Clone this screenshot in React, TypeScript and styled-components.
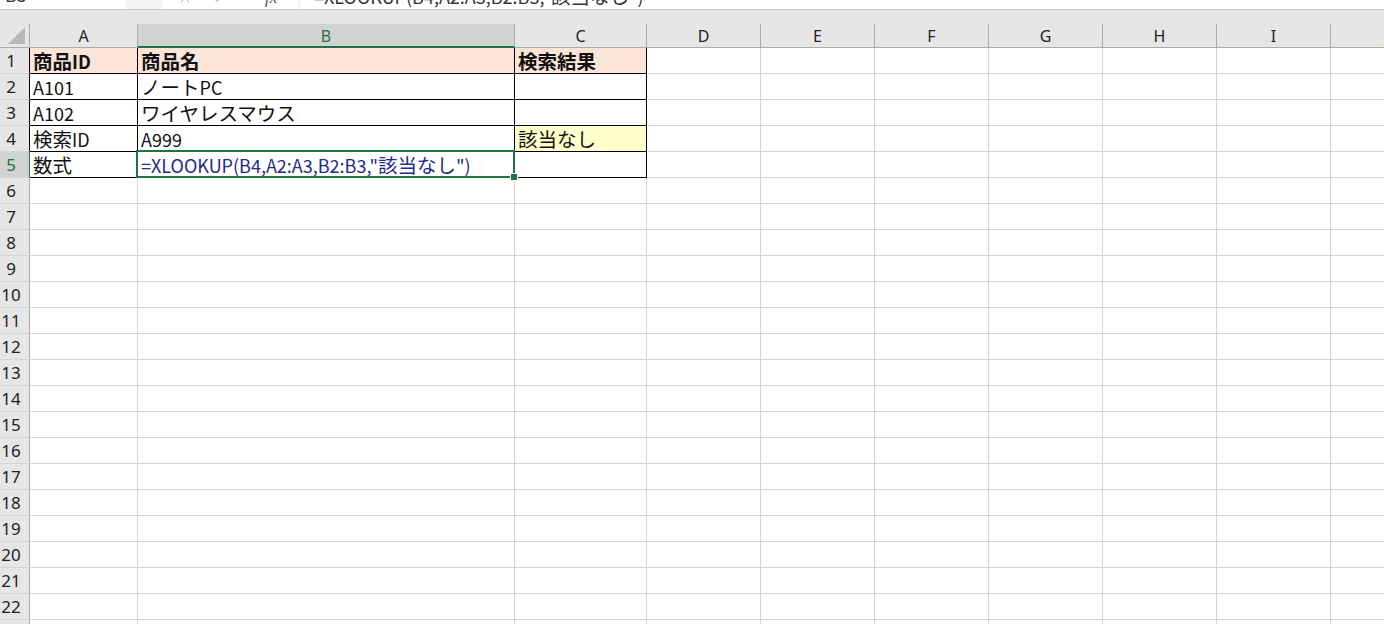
import React from "react";
import styled, { createGlobalStyle } from "styled-components";
import { X, Check } from "lucide-react";

const GlobalStyle = createGlobalStyle`
  html, body {
    margin: 0;
    padding: 0;
    background: #ffffff;
  }
  body {
    font-family: "Noto Sans CJK JP", "Noto Sans", sans-serif;
    overflow: hidden;
  }
`;

const GREEN = "#217346";
const GRID = "#d4d4d4";
const HEAD_LINE = "#ababab";

const colWidths = [108, 377, 132, 114, 114, 114, 114, 114, 114, 114];
const colNames = ["A", "B", "C", "D", "E", "F", "G", "H", "I", "J"];

type CellData = { text?: string; bold?: boolean; fill?: string; color?: string };

const data: Record<number, CellData[]> = {
  1: [
    { text: "商品ID", bold: true, fill: "#fbe4d8" },
    { text: "商品名", bold: true, fill: "#fbe4d8" },
    { text: "検索結果", bold: true, fill: "#fbe4d8" },
  ],
  2: [{ text: "A101" }, { text: "ノートPC" }, {}],
  3: [{ text: "A102" }, { text: "ワイヤレスマウス" }, {}],
  4: [{ text: "検索ID" }, { text: "A999" }, { text: "該当なし", fill: "#ffffcc" }],
  5: [
    { text: "数式" },
    { text: '=XLOOKUP(B4,A2:A3,B2:B3,"該当なし")', color: "#1f2a8c" },
    {},
  ],
};

const Sheet = styled.div`
  width: 1384px;
  height: 624px;
  overflow: hidden;
  display: flex;
  flex-direction: column;
`;

const FormulaStrip = styled.div`
  height: 10px;
  flex: none;
  display: flex;
  background: #f3f3f3;
  border-bottom: 1px solid #c8c8c8;
  box-sizing: border-box;
`;

const StripBox = styled.div<{ $width?: number; $left?: number }>`
  width: ${(p) => (p.$width ? `${p.$width}px` : "auto")};
  flex: ${(p) => (p.$width ? "none" : "1")};
  margin-left: ${(p) => p.$left ?? 0}px;
  height: 9px;
  background: #ffffff;
  overflow: hidden;
  display: flex;
  align-items: flex-start;
`;

const CutText = styled.div<{ $pad: number }>`
  margin-top: -15px;
  padding-left: ${(p) => p.$pad}px;
  font-size: 18px;
  line-height: 18px;
  color: #333;
  white-space: nowrap;
`;

const Dots = styled.div`
  width: 38px;
  flex: none;
  overflow: hidden;
  height: 9px;
  color: #9a9a9a;
  font-size: 14px;
  line-height: 14px;
  text-align: center;
  margin-top: -10px;
`;

const FxIcons = styled.div`
  display: flex;
  align-items: flex-start;
  margin-top: -10px;
  padding-left: 14px;
  color: #a0a0a0;
  gap: 18px;
`;

const Fx = styled.span`
  font-family: "Liberation Serif", serif;
  font-style: italic;
  font-size: 17px;
  line-height: 16px;
  color: #555;
  margin-left: 20px;
`;

const HeaderBand = styled.div`
  height: 38px;
  flex: none;
  display: flex;
  align-items: flex-end;
  background: #e6e6e6;
`;

const Corner = styled.div`
  width: 30px;
  height: 24px;
  flex: none;
  position: relative;
  box-sizing: border-box;
  border-right: 1px solid ${HEAD_LINE};
  border-bottom: 1px solid ${HEAD_LINE};
`;

const CornerTriangle = styled.div`
  position: absolute;
  right: 4px;
  bottom: 3px;
  width: 0;
  height: 0;
  border-style: solid;
  border-width: 0 0 17px 17px;
  border-color: transparent transparent #b8b8b8 transparent;
`;

const ColHead = styled.div<{ $w: number; $active?: boolean }>`
  width: ${(p) => p.$w}px;
  height: 24px;
  flex: none;
  box-sizing: border-box;
  display: flex;
  align-items: center;
  justify-content: center;
  padding-top: ${(p) => (p.$active ? 1 : 0)}px;
  font-family: "Noto Sans", sans-serif;
  font-size: 16px;
  color: ${(p) => (p.$active ? GREEN : "#222")};
  background: ${(p) => (p.$active ? "#d2d2d2" : "transparent")};
  border-right: 1px solid ${HEAD_LINE};
  border-bottom: ${(p) => (p.$active ? `2px solid ${GREEN}` : `1px solid ${HEAD_LINE}`)};
`;

const Row = styled.div`
  display: flex;
  height: 26px;
  flex: none;
`;

const RowHead = styled.div<{ $active?: boolean; $edge: string }>`
  width: 30px;
  flex: none;
  box-sizing: border-box;
  background: ${(p) => (p.$active ? "#d2d2d2" : "#e6e6e6")};
  color: ${(p) => (p.$active ? GREEN : "#222")};
  border-right: 1px solid ${(p) => p.$edge};
  border-bottom: 1px solid ${GRID};
  font-family: "Noto Sans", sans-serif;
  font-size: 17px;
  line-height: 26px;
  text-align: center;
  padding-right: 7px;
`;

const Cell = styled.div<{
  $w: number;
  $fill?: string;
  $right: string;
  $bottom: string;
  $bold?: boolean;
  $color?: string;
}>`
  width: ${(p) => p.$w}px;
  flex: none;
  position: relative;
  box-sizing: border-box;
  display: flex;
  align-items: center;
  background: ${(p) => p.$fill ?? "#ffffff"};
  border-right: 1px solid ${(p) => p.$right};
  border-bottom: 1px solid ${(p) => p.$bottom};
  padding: 1px 0 0 3px;
  font-size: 18px;
  line-height: 22px;
  font-weight: ${(p) => (p.$bold ? 700 : 400)};
  color: ${(p) => p.$color ?? "#111"};
  white-space: nowrap;
`;

const CellText = styled.span`
  line-height: 22px;
`;

const Wide = styled.span`
  font-size: 19.5px;
  line-height: 22px;
`;

const Selection = styled.div`
  position: absolute;
  z-index: 2;
  left: -2px;
  top: -2px;
  right: -1px;
  bottom: -1px;
  border: 2px solid ${GREEN};
  pointer-events: none;
`;

const FillHandle = styled.div`
  position: absolute;
  right: -5px;
  bottom: -5px;
  width: 6px;
  height: 6px;
  background: ${GREEN};
  border: 1px solid #ffffff;
`;

const CJK = /([\u3000-\u30ff\u4e00-\u9fff]+)/;

function Mixed({ text }: { text: string }) {
  return (
    <>
      {text.split(CJK).map((part, i) =>
        CJK.test(part) ? <Wide key={i}>{part}</Wide> : <React.Fragment key={i}>{part}</React.Fragment>
      )}
    </>
  );
}

const rows = Array.from({ length: 23 }, (_, i) => i + 1);

export default function App() {
  return (
    <>
      <GlobalStyle />
      <Sheet>
        <FormulaStrip>
          <StripBox $width={125}>
            <CutText $pad={5}>B5</CutText>
          </StripBox>
          <Dots>⋮</Dots>
          <StripBox $width={135}>
            <FxIcons>
              <X size={16} strokeWidth={1.5} />
              <Check size={16} strokeWidth={1.5} />
              <Fx>fx</Fx>
            </FxIcons>
          </StripBox>
          <StripBox $left={2}>
            <CutText $pad={14}>
              <Mixed text={'=XLOOKUP(B4,A2:A3,B2:B3,"該当なし")'} />
            </CutText>
          </StripBox>
        </FormulaStrip>
        <HeaderBand>
          <Corner>
            <CornerTriangle />
          </Corner>
          {colWidths.map((w, i) => (
            <ColHead key={colNames[i]} $w={w} $active={i === 1}>
              {colNames[i]}
            </ColHead>
          ))}
        </HeaderBand>
        {rows.map((r) => {
          const inTable = r <= 5;
          return (
            <Row key={r}>
              <RowHead
                $active={r === 5}
                $edge={r === 5 ? GREEN : inTable ? "#000" : HEAD_LINE}
              >
                {r}
              </RowHead>
              {colWidths.map((w, c) => {
                const d = inTable && c < 3 ? data[r][c] : {};
                const boxed = inTable && c < 3;
                return (
                  <Cell
                    key={c}
                    $w={w}
                    $fill={d.fill}
                    $bold={d.bold}
                    $color={d.color}
                    $right={boxed ? "#000" : GRID}
                    $bottom={boxed ? "#000" : GRID}
                  >
                    {d.text && (
                      <CellText>
                        <Mixed text={d.text} />
                      </CellText>
                    )}
                    {r === 5 && c === 1 && (
                      <Selection>
                        <FillHandle />
                      </Selection>
                    )}
                  </Cell>
                );
              })}
            </Row>
          );
        })}
      </Sheet>
    </>
  );
}
